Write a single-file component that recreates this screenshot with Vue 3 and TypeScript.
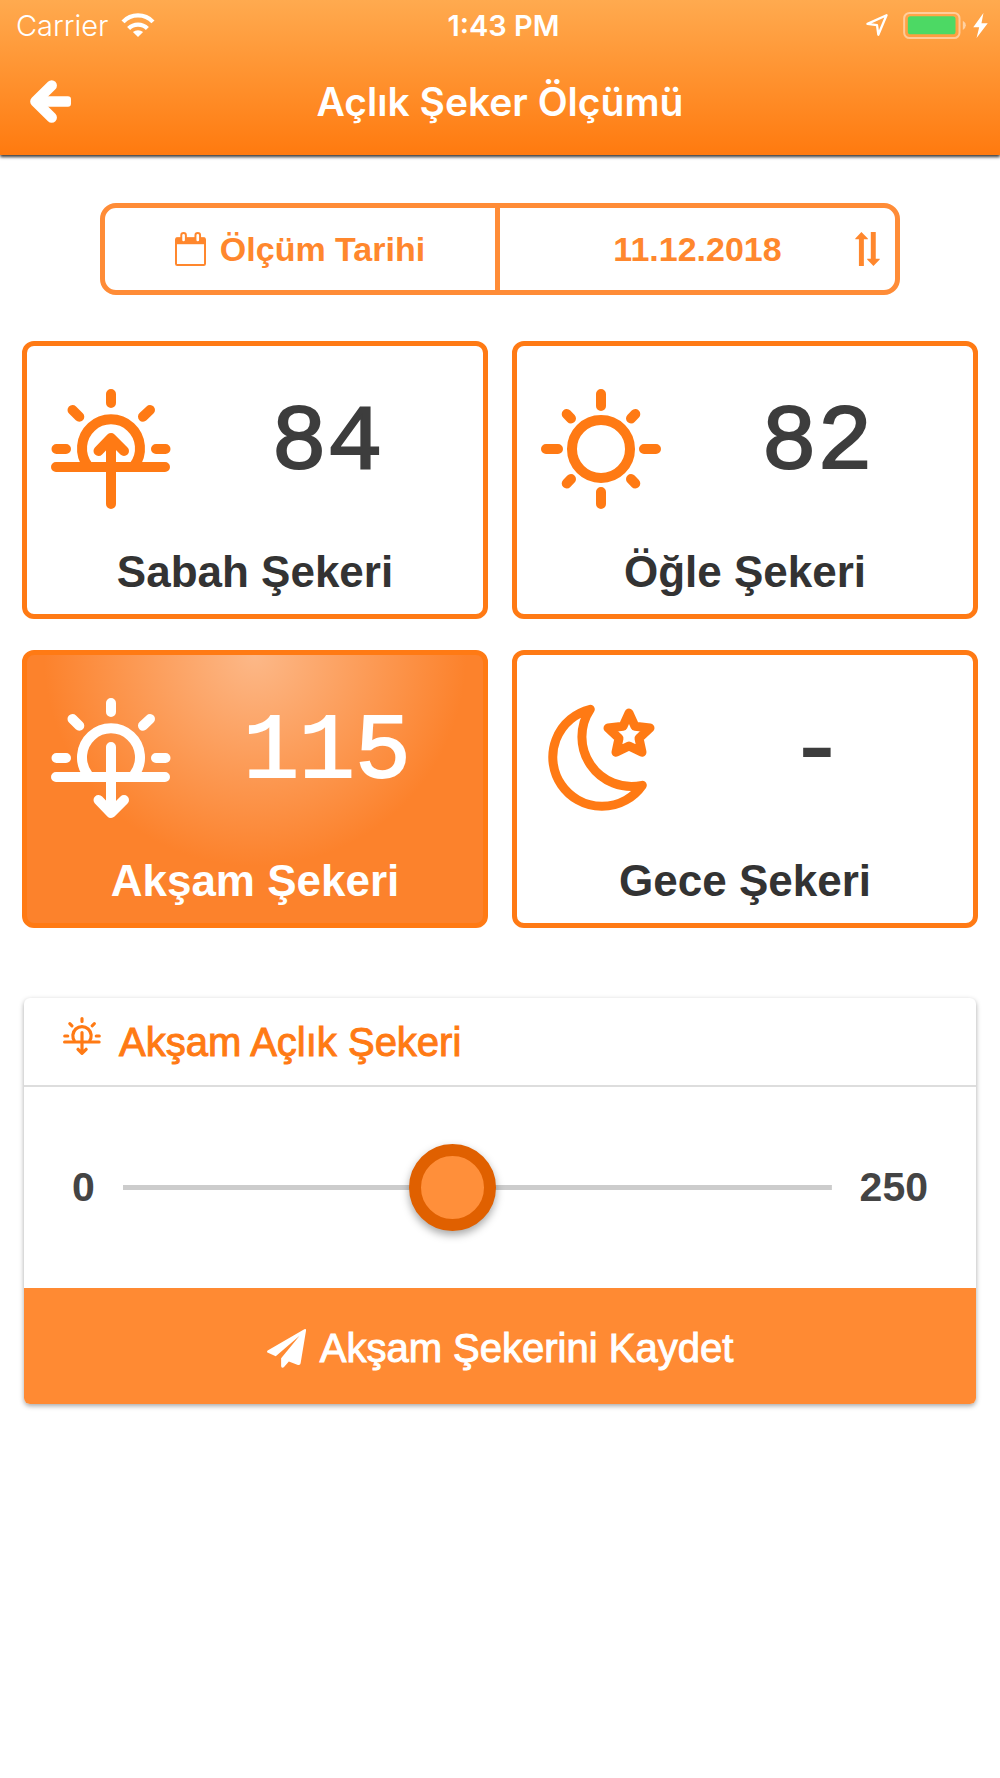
<script setup lang="ts">
import { computed, ref } from 'vue'

type IconName = 'sunrise' | 'sun' | 'sunset' | 'moon'

interface Measurement {
  id: string
  icon: IconName
  label: string
  value: number | null
}

const measurements = ref<Measurement[]>([
  { id: 'sabah', icon: 'sunrise', label: 'Sabah Şekeri', value: 84 },
  { id: 'ogle', icon: 'sun', label: 'Öğle Şekeri', value: 82 },
  { id: 'aksam', icon: 'sunset', label: 'Akşam Şekeri', value: 115 },
  { id: 'gece', icon: 'moon', label: 'Gece Şekeri', value: null },
])

const icons: Record<IconName, string[]> = {
  sunrise: [
    'M60 5V14M21.5 21L28.3 27.7M99 21L92 27.7M5.5 60H15M105 60H114.5M5 78H114',
    'M60 115V49M47.5 62L60 49L73 62',
  ],
  sun: [
    'M60 5V17M60 103V115M5 60H17M103 60H115',
    'M25.7 25L30 29.5M94.3 25L90 29.5M25.7 94.5L30 90M94.3 94.5L90 90',
    'M60 31A29 29 0 1 1 60 89A29 29 0 1 1 60 31Z',
  ],
  sunset: [
    'M60 5V14M21.5 21L28.3 27.7M99 21L92 27.7M5.5 60H15M105 60H114.5M5 79H114',
    'M60 49V114M47.5 102L60 115L73 102',
  ],
  moon: [
    'M49.3 11.3A49.2 49.2 0 1 0 101.3 87.3A49.6 49.6 0 0 1 49.3 11.3Z',
    'M88 15L94 28.3L109 30L98 40.2L101 54.3L88 48L75 54.3L78 40.2L67 30L82 28.3Z',
  ],
}

const halfSun = 'M37 77A29 29 0 1 1 83 77'

const activeId = ref('aksam')
const level = ref(115)
const active = computed(() => measurements.value.find((m) => m.id === activeId.value)!)
const period = computed(() => active.value.label.split(' ')[0])

function select(m: Measurement) {
  activeId.value = m.id
  level.value = m.value ?? 0
}

function save() {
  active.value.value = Number(level.value)
}
</script>

<template>
  <div class="screen">
    <header class="top">
      <div class="status">
        <div class="carrier">
          <span>Carrier</span>
          <svg class="wifi" viewBox="0 0 103 73" aria-hidden="true">
            <path d="M6 27A62.8 62.8 0 0 1 97 27M23 47A40 40 0 0 1 80 47" fill="none" stroke="currentColor" stroke-width="13" />
            <path d="M51.5 73L36 58A24 24 0 0 1 67 58Z" fill="currentColor" />
          </svg>
        </div>
        <span class="time">1:43 PM</span>
        <div class="power">
          <svg class="location" viewBox="0 0 66 67" aria-hidden="true">
            <path d="M4 30L62 4L37 63L33 34Z" fill="none" stroke="currentColor" stroke-width="7" stroke-linejoin="round" />
          </svg>
          <svg class="battery" viewBox="0 0 188 81" aria-hidden="true">
            <rect x="3" y="3" width="166" height="75" rx="16" fill="none" stroke="#fff" stroke-opacity=".45" stroke-width="6" />
            <rect x="14" y="13" width="143" height="54" rx="8" fill="#4cd964" />
            <path d="M179 26Q188 31 188 40Q188 49 179 54Z" fill="#fff" fill-opacity=".5" />
          </svg>
          <svg class="bolt" viewBox="0 0 44 76" aria-hidden="true">
            <path d="M31 0L0 43H18L10 76L44 31H25Z" fill="currentColor" />
          </svg>
        </div>
      </div>
      <div class="nav">
        <button class="back" type="button" aria-label="Geri">
          <svg viewBox="0 0 121 127" aria-hidden="true">
            <path d="M64 16L16 63.5L64 111" fill="none" stroke="currentColor" stroke-width="31" stroke-linecap="round" stroke-linejoin="round" />
            <rect x="26" y="48" width="95" height="31" rx="9" fill="currentColor" />
          </svg>
        </button>
        <h1>Açlık Şeker Ölçümü</h1>
      </div>
    </header>

    <main>
      <div class="date">
        <label class="date-label" for="date">
          <svg viewBox="0 0 94 103" aria-hidden="true">
            <rect x="3" y="19" width="88" height="81" rx="4" fill="none" stroke="currentColor" stroke-width="6" />
            <rect x="3" y="17" width="88" height="20" fill="currentColor" />
            <rect x="19" y="3" width="14" height="28" rx="7" fill="#fff" stroke="currentColor" stroke-width="6" />
            <rect x="62" y="3" width="14" height="28" rx="7" fill="#fff" stroke="currentColor" stroke-width="6" />
          </svg>
          <span>Ölçüm Tarihi</span>
        </label>
        <button id="date" class="date-value" type="button">
          <span>11.12.2018</span>
          <svg viewBox="0 0 74 103" aria-hidden="true">
            <path d="M18.5 0L38 20V22H26V103H11V22H0V20ZM47 0H62V81H74V83L55 103L36 83V81H47Z" fill="currentColor" />
          </svg>
        </button>
      </div>

      <div class="cards">
        <button
          v-for="m in measurements"
          :key="m.id"
          type="button"
          class="card"
          :class="{ active: m.id === activeId }"
          :aria-pressed="m.id === activeId"
          @click="select(m)"
        >
          <span class="reading">
            <svg class="icon" :class="m.icon" viewBox="0 0 120 120" aria-hidden="true">
              <path v-if="m.icon === 'sunrise' || m.icon === 'sunset'" class="flat" :d="halfSun" />
              <path v-for="d in icons[m.icon]" :key="d" :d="d" />
            </svg>
            <span class="value">{{ m.value ?? '-' }}</span>
          </span>
          <span class="name">{{ m.label }}</span>
        </button>
      </div>

      <section class="panel">
        <h2>
          <svg class="icon" :class="active.icon" viewBox="0 0 120 120" aria-hidden="true">
            <path v-if="active.icon === 'sunrise' || active.icon === 'sunset'" class="flat" :d="halfSun" />
            <path v-for="d in icons[active.icon]" :key="d" :d="d" />
          </svg>
          <label for="level">{{ period }} Açlık Şekeri</label>
        </h2>
        <div class="range">
          <span>0</span>
          <input id="level" v-model="level" type="range" min="0" max="250" />
          <span>250</span>
        </div>
        <button class="save" type="button" @click="save">
          <svg viewBox="0 0 116 116" aria-hidden="true">
            <path
              d="M111 1L2 64Q-2 68 3 71L26 81L97 20L42 87V111Q44 118 50 114L65 97L92 107Q99 109 100 102L116 5Q117 -2 111 1Z"
              fill="currentColor"
            />
          </svg>
          <span>{{ period }} Şekerini Kaydet</span>
        </button>
      </section>
    </main>
  </div>
</template>

<style>
body {
  margin: 0;
  background: #fff;
}
</style>

<style scoped>
.screen {
  font-family: "Liberation Sans", Arial, sans-serif;
  color: #333;
}

button {
  margin: 0;
  padding: 0;
  border: 0;
  background: none;
  color: inherit;
  font: inherit;
  cursor: pointer;
}

svg {
  display: block;
  flex: none;
}

.top {
  position: relative;
  color: #fff;
  font-family: Inter, sans-serif;
  background: linear-gradient(#ffaa4f, #ff7a0f);
  box-shadow: 0 2px 3px rgba(0, 0, 0, 0.8);
}

.status {
  display: grid;
  grid-template-columns: 1fr auto 1fr;
  align-items: center;
  height: 50px;
  padding: 0 12px 0 16px;
  font-size: 29px;
}

.carrier,
.power {
  display: flex;
  align-items: center;
}

.carrier {
  gap: 13px;
  font-weight: 300;
}

.time {
  padding-left: 3px;
  font-weight: 600;
}

.power {
  justify-content: flex-end;
}

.wifi {
  width: 34px;
  height: 24px;
}

.location {
  width: 22px;
  height: 22px;
  margin-right: 15px;
}

.battery {
  width: 63px;
  height: 27px;
  margin-right: 7px;
}

.bolt {
  width: 15px;
  height: 25px;
}

.nav {
  display: grid;
  grid-template-columns: 1fr auto 1fr;
  align-items: center;
  height: 103px;
  padding: 0 30px 2px;
}

.back {
  justify-self: start;
}

.back svg {
  width: 41px;
  height: 43px;
}

h1 {
  margin: 0;
  font-size: 39px;
  font-weight: 600;
}

main {
  padding: 48px 22px;
}

.date {
  display: grid;
  grid-template-columns: 1fr 1fr;
  height: 82px;
  margin: 0 78px 46px;
  border: 5px solid #ff8c37;
  border-radius: 16px;
  color: #ff872d;
  font-size: 34px;
  font-weight: 700;
}

.date-label {
  display: flex;
  align-items: center;
  justify-content: center;
  gap: 14px;
  border-right: 5px solid #ff8c37;
}

.date-label svg {
  width: 31px;
  height: 34px;
}

.date-value {
  display: grid;
  grid-template-columns: 1fr auto 1fr;
  align-items: center;
  padding: 0 15px;
}

.date-value span {
  grid-column: 2;
}

.date-value svg {
  justify-self: end;
  width: 25px;
  height: 34px;
}

.cards {
  display: grid;
  grid-template-columns: 1fr 1fr;
  gap: 31px 24px;
  margin-bottom: 70px;
}

.card {
  padding: 43px 0 17px;
  border: 5px solid #ff7a14;
  border-radius: 12px;
}

.icon {
  fill: none;
  stroke: #ff7a14;
  stroke-width: 10;
  stroke-linecap: round;
  stroke-linejoin: round;
}

.icon.moon {
  stroke-width: 9;
}

.icon .flat {
  stroke-linecap: butt;
}

.reading {
  display: flex;
  margin-bottom: 38px;
  padding-left: 24px;
}

.reading .icon {
  width: 120px;
  height: 120px;
}

.value {
  flex: 1;
  color: #3d3d3d;
  font-family: "Liberation Mono", "Courier New", monospace;
  font-size: 93px;
  font-weight: 400;
  line-height: 110px;
  -webkit-text-stroke: 2px;
}

.name {
  display: block;
  font-size: 44px;
  font-weight: 700;
  line-height: 50px;
}

.card.active {
  color: #fff;
  background: radial-gradient(circle at 50% 0, #fcb888, #fc822c 60%) #fc822c;
}

.card.active .icon {
  stroke: #fff;
}

.card.active .value {
  color: #fff;
}

.panel {
  margin: 0 2px;
  border-radius: 6px;
  box-shadow: 0 2px 5px rgba(0, 0, 0, 0.35);
  overflow: hidden;
}

h2 {
  display: flex;
  gap: 18px;
  margin: 0;
  padding: 19px 39px 18px;
  border-bottom: 2px solid #ddd;
  color: #ff7a14;
  font-size: 40px;
  font-weight: 400;
  line-height: 50px;
  -webkit-text-stroke: 1px;
}

h2 .icon {
  width: 38px;
  height: 38px;
}

.range {
  display: flex;
  align-items: center;
  gap: 28px;
  height: 201px;
  padding: 0 48px;
  color: #444;
  font-size: 41px;
  font-weight: 700;
}

.range input {
  flex: 1;
  min-width: 0;
  height: 88px;
  margin: 0;
  appearance: none;
  background: linear-gradient(#ccc, #ccc) center / 100% 5px no-repeat;
}

.range input::-webkit-slider-thumb {
  appearance: none;
  box-sizing: border-box;
  width: 87px;
  height: 87px;
  border: 12px solid #e06000;
  border-radius: 50%;
  background: #ff8f3a;
  box-shadow: 0 4px 8px rgba(0, 0, 0, 0.35);
}

.save {
  display: flex;
  align-items: center;
  justify-content: center;
  gap: 14px;
  width: 100%;
  height: 116px;
  padding-top: 4px;
  background: #ff8a33;
  color: #fff;
  font-size: 40px;
  -webkit-text-stroke: 1px;
}

.save svg {
  width: 39px;
  height: 39px;
}
</style>
